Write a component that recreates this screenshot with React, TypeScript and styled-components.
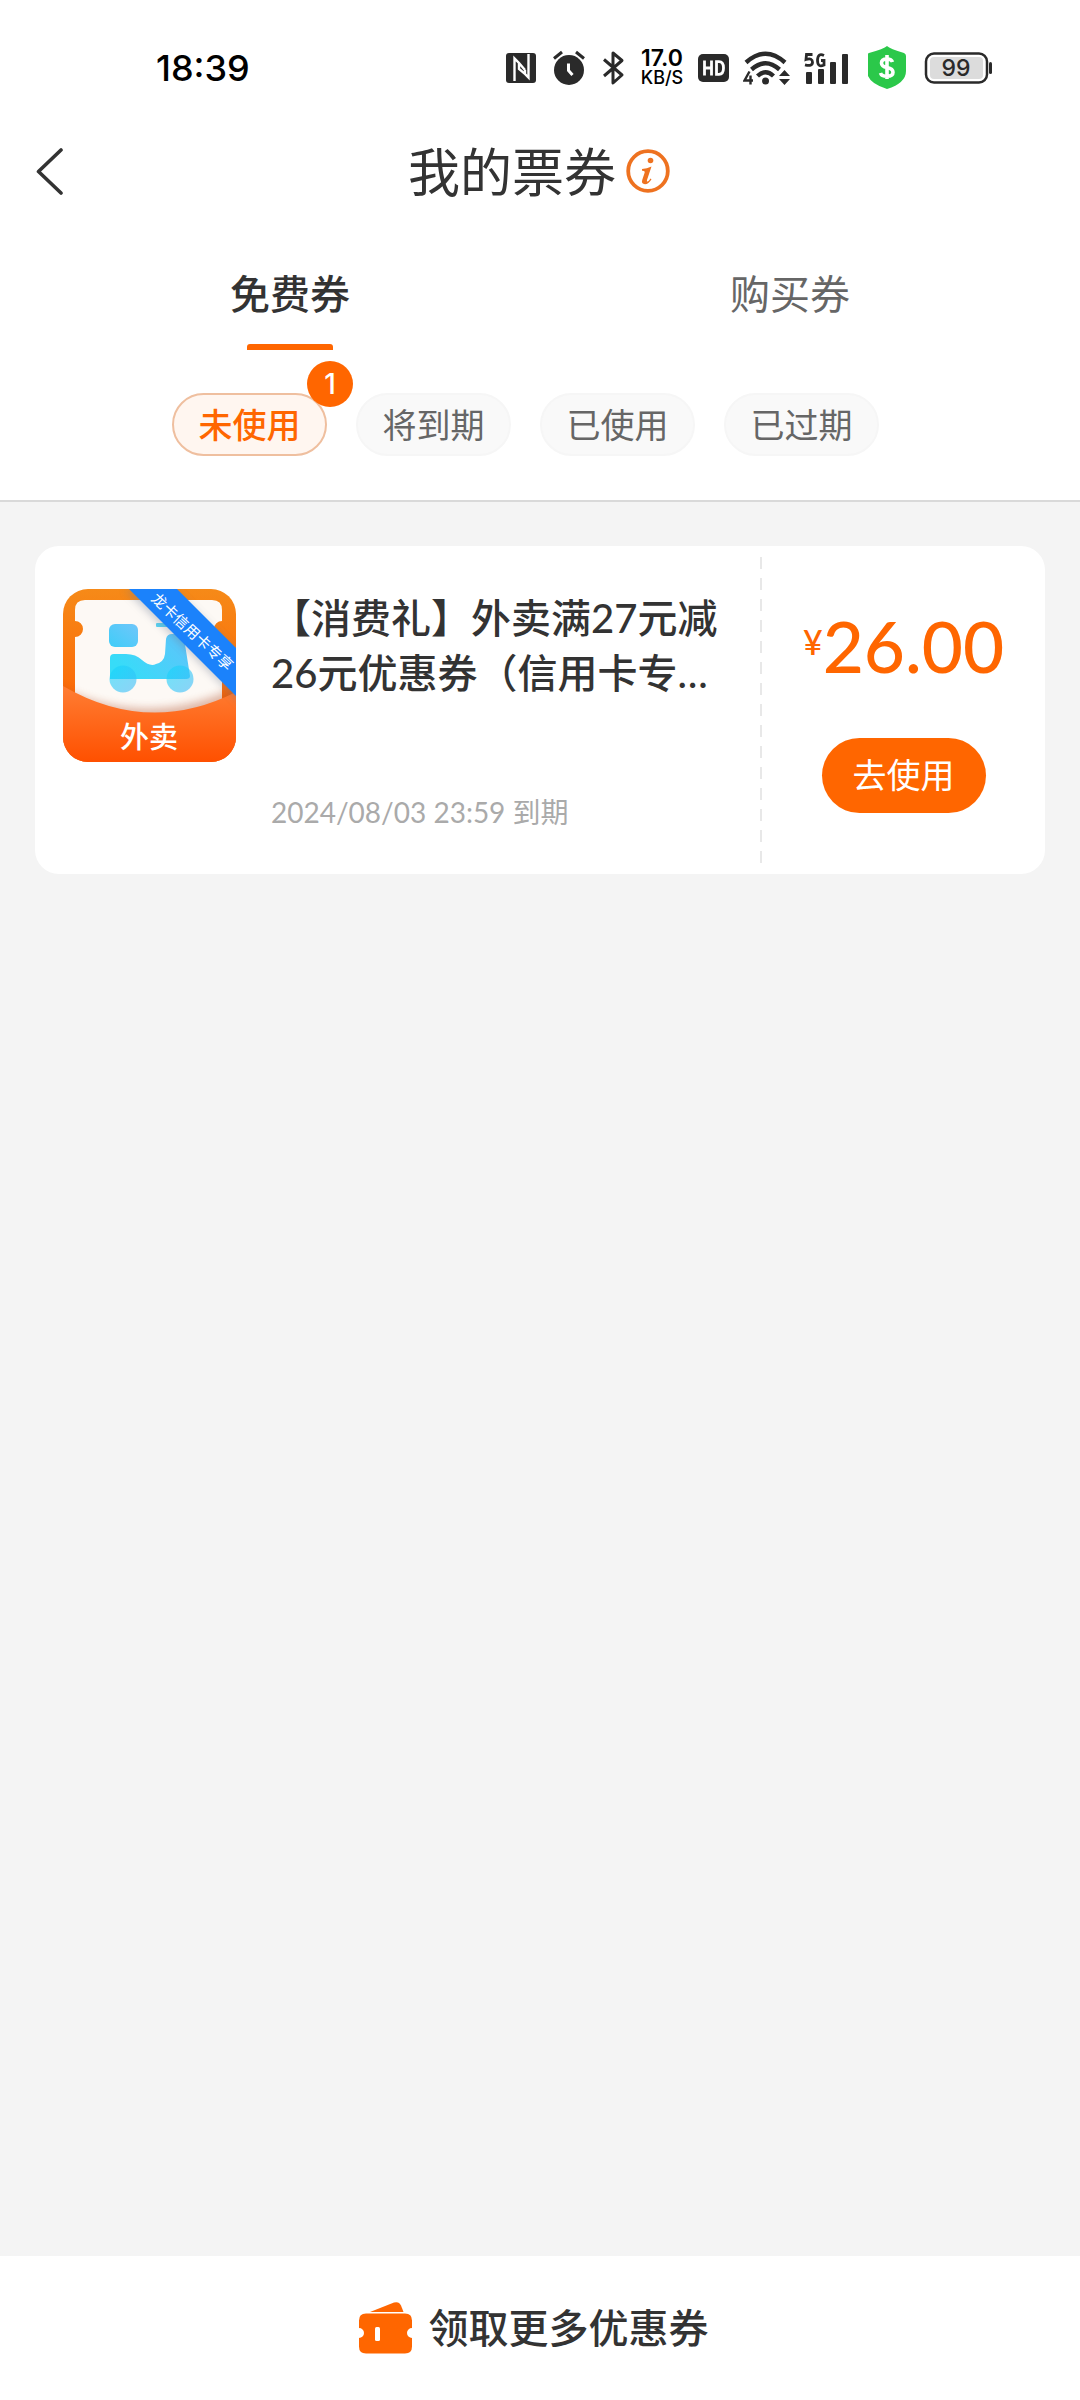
import React, { useState } from "react";
import styled, { createGlobalStyle, css } from "styled-components";

const orange = "#ff6600";
const ink = "#2a2a2a";

const GlobalStyle = createGlobalStyle`
  *, *::before, *::after { box-sizing: border-box; }
  body {
    margin: 0;
    background: #f4f4f4;
    color: #333;
    font-family: Lato, "Noto Sans CJK SC", sans-serif;
  }
  h1, h2, p { margin: 0; font-weight: 400; }
  button { font-family: inherit; padding: 0; border: 0; background: none; cursor: pointer; }
  svg { display: block; flex: none; }
`;

const Page = styled.div`
  min-height: 100vh;
  display: flex;
  flex-direction: column;
`;

const Top = styled.header`
  background: #fff;
  border-bottom: 2px solid #d9d9d9;
`;

const StatusBar = styled.div`
  height: 136px;
  padding: 0 88px 0 156px;
  display: flex;
  align-items: center;
  justify-content: space-between;
  font-family: Inter, sans-serif;
  color: #000;
`;

const Clock = styled.time`
  font-size: 36px;
  line-height: 40px;
  font-weight: 500;
`;

const StatusIcons = styled.div`
  display: flex;
  align-items: center;
  gap: 14px;
`;

const Speed = styled.div`
  width: 44px;
  display: flex;
  flex-direction: column;
  align-items: center;
  font-weight: 600;
  font-size: 23px;
  line-height: 20px;
`;

const SpeedUnit = styled.span`
  font-weight: 500;
  font-size: 18px;
  line-height: 20px;
`;

const TitleBar = styled.div`
  height: 72px;
  padding: 0 36px;
  display: grid;
  grid-template-columns: 1fr auto 1fr;
  align-items: center;
`;

const IconButton = styled.button`
  display: flex;
  justify-self: start;
`;

const TitleGroup = styled.div`
  display: flex;
  align-items: center;
  gap: 10px;
`;

const Title = styled.h1`
  font-size: 52px;
  line-height: 72px;
`;

const Tabs = styled.div`
  display: flex;
  padding: 56px 40px 0;
`;

const Tab = styled.button<{ $active: boolean }>`
  flex: 1;
  display: flex;
  flex-direction: column;
  align-items: center;
  gap: 20px;
  font-size: 40px;
  line-height: 60px;
  font-weight: ${(p) => (p.$active ? 500 : 400)};
  color: ${(p) => (p.$active ? "#333" : "#666")};

  &::after {
    content: "";
    width: 86px;
    height: 6px;
    border-radius: 3px 3px 0 0;
    background: ${(p) => (p.$active ? orange : "transparent")};
  }
`;

const Chips = styled.div`
  display: flex;
  justify-content: center;
  padding: 43px 0 44px;
`;

const Chip = styled.button<{ $active: boolean }>`
  position: relative;
  width: 155px;
  height: 63px;
  margin-right: 29px;
  border: 2px solid #f6f6f6;
  border-radius: 32px;
  background: #f9f9f9;
  color: #666;
  font-size: 34px;
  line-height: 48px;
  ${(p) =>
    p.$active &&
    css`
      border-color: #efbf9f;
      background: #fff6f0;
      color: ${orange};
      font-weight: 500;
    `}
`;

const Badge = styled.span`
  position: absolute;
  top: -34px;
  right: -28px;
  width: 46px;
  height: 46px;
  border-radius: 50%;
  background: ${orange};
  color: #fff;
  font-family: Inter, sans-serif;
  font-size: 28px;
  line-height: 46px;
  text-align: center;
`;

const List = styled.main`
  flex: 1;
  padding: 44px 35px;
`;

const Card = styled.article`
  display: flex;
  background: #fff;
  border-radius: 24px;
`;

const CardBody = styled.div`
  flex: 1;
  min-width: 0;
  display: flex;
  align-items: flex-start;
  gap: 35px;
  padding: 43px 40px 44px 28px;
`;

const CardInfo = styled.div`
  flex: 1;
  min-width: 0;
  padding: 2px 0;
`;

const CardTitle = styled.h2`
  font-size: 40px;
  line-height: 55px;
  font-weight: 500;
`;

const Expiry = styled.p`
  margin-top: 95px;
  font-size: 28px;
  line-height: 32px;
  color: #aaa;
`;

const Perforation = styled.div`
  width: 2px;
  margin: 11px 0;
  background: repeating-linear-gradient(#e8e8e8 0 12px, transparent 12px 21px);
`;

const Stub = styled.div`
  width: 283px;
  padding-top: 2px;
  display: flex;
  flex-direction: column;
  align-items: center;
  justify-content: center;
  gap: 56px;
`;

const Price = styled.p`
  display: flex;
  align-items: center;
  font-size: 71px;
  line-height: 72px;
  font-weight: 500;
  color: ${orange};
`;

const Currency = styled.span`
  font-size: 34px;
  line-height: 40px;
  padding-bottom: 8px;
`;

const UseButton = styled.button`
  width: 164px;
  height: 75px;
  border-radius: 38px;
  background: ${orange};
  color: #fff;
  font-size: 34px;
  line-height: 48px;
`;

const Footer = styled.footer`
  height: 144px;
  background: #fff;
  display: flex;
  align-items: center;
  justify-content: center;
`;

const MoreLink = styled.a`
  display: flex;
  align-items: center;
  gap: 15px;
  margin-right: 14px;
  color: #333;
  text-decoration: none;
  font-size: 40px;
  line-height: 60px;
  font-weight: 500;
`;

const NfcIcon = () => (
  <svg width="32" height="32" viewBox="0 0 32 32">
    <rect y="1" width="30" height="30" rx="3" fill={ink} />
    <path d="M8.500 29V6.500L13 11v6l6 5v-4M22.500 2v23.500L17 20M13 11l6 7" fill="none" stroke="#fff" strokeWidth="2.400" />
  </svg>
);

const AlarmIcon = () => (
  <svg width="36" height="36" viewBox="0 0 36 36">
    <circle cx="17" cy="20" r="15" fill={ink} />
    <path d="M2 8.500l8-6.500M32 8.500L24 2" stroke={ink} strokeWidth="3" />
    <path d="M16.500 13.500v7l4 4.500" fill="none" stroke="#fff" strokeWidth="3" />
  </svg>
);

const BluetoothIcon = () => (
  <svg width="24" height="36" viewBox="0 0 24 36">
    <path
      d="M2 9.500l18 15.500-9 8V3l9 7.500L2 26"
      fill="none"
      stroke={ink}
      strokeWidth="3"
      strokeLinejoin="round"
    />
  </svg>
);

const HdIcon = () => (
  <svg width="31" height="28" viewBox="0 0 31 28">
    <rect width="31" height="28" rx="5" fill={ink} />
    <path
      d="M6.500 6.500v15M13.500 6.500v15M6.500 14h7M18.500 7.700h2.500q4.500 0 4.500 6.300t-4.500 6.300h-2.500z"
      fill="none"
      stroke="#fff"
      strokeWidth="2.800"
    />
  </svg>
);

const WifiIcon = () => (
  <svg width="47" height="34" viewBox="0 0 47 34">
    <path
      d="M3 11.500Q22.500-6 42 11.500M8.500 18.500q14-12.500 28 0M14.500 25q8-7.500 16 0"
      fill="none"
      stroke={ink}
      strokeWidth="4.400"
    />
    <circle cx="22.500" cy="30" r="3.500" fill={ink} />
    <path d="M36 25l5.500-6 5.500 6zM36 28l5.500 6 5.500-6z" fill={ink} />
    <path d="M6.500 20.500L1.500 29.500h8.500M7.500 24.500v9" fill="none" stroke={ink} strokeWidth="2.400" />
  </svg>
);

const SignalIcon = () => (
  <svg width="50" height="34" viewBox="0 0 50 34">
    <path
      d="M8.500 3.500H2.500L2 8.500q6.500-2 6.500 2.800 0 4.500-7.500 2.500M20 4.500q-6-3-6.500 4.500 0 8 6.500 5V9.500h-3"
      fill="none"
      stroke={ink}
      strokeWidth="2.800"
    />
    <rect x="2" y="21" width="6" height="12" rx="1" fill={ink} />
    <rect x="14" y="18" width="6" height="15" rx="1" fill={ink} />
    <rect x="26" y="11" width="6" height="22" rx="1" fill={ink} />
    <rect x="38" y="3" width="6" height="30" rx="1" fill={ink} />
  </svg>
);

const ShieldIcon = () => (
  <svg width="42" height="46" viewBox="0 0 42 46">
    <path d="M19 1q3 3 17 7 2 1 2 3v15q0 12-19 18Q-1 38-1 26V11q0-2 2-3Q16 4 19 1z" fill="#2bc84a" />
    <path
      d="M24.500 17q-1-3-5.500-3-5.500 0-5.500 4 0 3.500 5.500 4.500 6 1 6 4.800 0 4-6 4-5.500 0-6.500-3.300M19 10v24"
      fill="none"
      stroke="#fff"
      strokeWidth="3.600"
    />
  </svg>
);

const BatteryIcon = () => (
  <svg width="68" height="32" viewBox="0 0 68 32">
    <rect x="2" y="1.500" width="61" height="29" rx="8" fill="#fff" stroke={ink} strokeWidth="2.500" />
    <rect x="6" y="5" width="53" height="22" rx="4" fill="#dcdcdc" />
    <rect x="65" y="10" width="3" height="12" rx="1.500" fill={ink} />
    <text x="32" y="24" textAnchor="middle" fontFamily="Inter, sans-serif" fontSize="23" fontWeight="500" fill={ink}>
      99
    </text>
  </svg>
);

const BackIcon = () => (
  <svg width="30" height="48" viewBox="0 0 30 48">
    <path
      d="M25 2L2.500 23.500 25 45"
      fill="none"
      stroke="#333"
      strokeWidth="3.600"
      strokeLinecap="round"
      strokeLinejoin="round"
    />
  </svg>
);

const InfoIcon = () => (
  <svg width="46" height="46" viewBox="0 0 46 46">
    <circle cx="22" cy="22" r="19.800" fill="none" stroke="#ee7220" strokeWidth="3.800" />
    <circle cx="24.500" cy="11.500" r="2.800" fill="#ee7220" />
    <path
      d="M16 20q5-.5 9.500-2.500l-4.500 13.500q-.5 2 .8 1.500 1.200-.6 2.700-3l1 .7q-3 5-6.500 5-4-.2-2.800-4.200l2.500-7.500q.5-2-2.700-1.700z"
      fill="#ee7220"
    />
  </svg>
);

const TicketIcon = () => (
  <svg width="56" height="54" viewBox="0 0 56 54">
    <path d="M12 11L36 1.500q5-1.500 7 3l2.500 6.500z" fill={orange} />
    <path
      d="M8 12.500h39q7 0 7 7v7.500a5 5 0 0 0 0 10v8.500q0 7-7 7H8q-7 0-7-7V37a5 5 0 0 0 0-10v-7.500q0-7 7-7z"
      fill={orange}
    />
    <rect x="17" y="26" width="5" height="14" rx="1.500" fill="#fff" />
  </svg>
);

const TakeawayIcon = () => (
  <svg width="173" height="173" viewBox="0 0 173 173" role="img" aria-label="外卖">
    <defs>
      <clipPath id="tile">
        <rect width="173" height="173" rx="25" />
      </clipPath>
      <linearGradient id="back" x1="0" y1="0" x2="0" y2="1">
        <stop offset="0" stopColor="#f68a18" />
        <stop offset="0.600" stopColor="#fb6a08" />
      </linearGradient>
      <linearGradient id="pocket" x1="0" y1="0" x2="0" y2="1">
        <stop offset="0" stopColor="#ff7d33" />
        <stop offset="1" stopColor="#ff5000" />
      </linearGradient>
      <linearGradient id="scooter" x1="0" y1="0.500" x2="1" y2="0">
        <stop offset="0" stopColor="#37dcf8" />
        <stop offset="1" stopColor="#62c2fb" />
      </linearGradient>
      <linearGradient id="crate" x1="0" y1="1" x2="1" y2="0">
        <stop offset="0" stopColor="#3fcdf8" />
        <stop offset="1" stopColor="#70c6fa" />
      </linearGradient>
      <linearGradient id="wheel" x1="0" y1="0" x2="1" y2="1">
        <stop offset="0" stopColor="#12d6fb" />
        <stop offset="1" stopColor="#3fb8f7" />
      </linearGradient>
      <filter id="shade" x="-20%" y="-20%" width="140%" height="140%">
        <feGaussianBlur stdDeviation="4" />
      </filter>
    </defs>
    <g clipPath="url(#tile)">
      <rect width="173" height="173" fill="url(#back)" />
      <path
        d="M22 11h127q10 0 10 10v11a8 8 0 0 0 0 16v80H12V48a8 8 0 0 0 0-16V21q0-10 10-10z"
        fill="#fdf9f5"
      />
      <rect x="46" y="35" width="29" height="23" rx="6" fill="url(#crate)" />
      <rect x="93" y="34" width="22" height="4" rx="1" fill="#58d3f3" />
      <path
        d="M47 69q0-4 4-4h12q10 0 16 6 8 7 14 4 8-2 9-10l1-15q1-5 6-5h7q4 0 5 4l6 38q0 3-4 3H47z"
        fill="url(#scooter)"
      />
      <circle cx="60" cy="90" r="13.500" fill="url(#wheel)" opacity="0.600" />
      <circle cx="117" cy="90" r="13.500" fill="url(#wheel)" opacity="0.600" />
      <path d="M-10 95Q86 145 183 93v80H-10z" fill="#b0502a" opacity="0.400" filter="url(#shade)" />
      <path d="M0 97Q86 147 173 103v70H0z" fill="url(#pocket)" />
      <path d="M62 0h48l70 70v46z" fill="#6a7890" opacity="0.400" filter="url(#shade)" />
      <path d="M66 0h48l59 59v48z" fill="#1b82fb" />
      <text
        x="129"
        y="48"
        transform="rotate(43 129 43)"
        textAnchor="middle"
        fontFamily='"Noto Sans CJK SC", sans-serif'
        fontSize="15"
        fill="#fff"
      >
        龙卡信用卡专享
      </text>
      <text
        x="86"
        y="159"
        textAnchor="middle"
        fontFamily='"Noto Sans CJK SC", sans-serif'
        fontSize="29"
        fontWeight="500"
        fill="#fff"
      >
        外卖
      </text>
    </g>
  </svg>
);

const tabs = ["免费券", "购买券"];
const filters = [
  { label: "未使用", count: 1 },
  { label: "将到期", count: 0 },
  { label: "已使用", count: 0 },
  { label: "已过期", count: 0 },
];

export default function App() {
  const [tab, setTab] = useState(0);
  const [filter, setFilter] = useState(0);

  return (
    <Page>
      <GlobalStyle />
      <Top>
        <StatusBar>
          <Clock>18:39</Clock>
          <StatusIcons>
            <NfcIcon />
            <AlarmIcon />
            <BluetoothIcon />
            <Speed>
              17.0
              <SpeedUnit>KB/S</SpeedUnit>
            </Speed>
            <HdIcon />
            <WifiIcon />
            <SignalIcon />
            <ShieldIcon />
            <BatteryIcon />
          </StatusIcons>
        </StatusBar>
        <TitleBar>
          <IconButton aria-label="返回">
            <BackIcon />
          </IconButton>
          <TitleGroup>
            <Title>我的票券</Title>
            <IconButton aria-label="说明">
              <InfoIcon />
            </IconButton>
          </TitleGroup>
        </TitleBar>
        <Tabs role="tablist">
          {tabs.map((label, i) => (
            <Tab key={label} role="tab" aria-selected={tab === i} $active={tab === i} onClick={() => setTab(i)}>
              {label}
            </Tab>
          ))}
        </Tabs>
        <Chips>
          {filters.map(({ label, count }, i) => (
            <Chip key={label} aria-pressed={filter === i} $active={filter === i} onClick={() => setFilter(i)}>
              {label}
              {count > 0 && <Badge>{count}</Badge>}
            </Chip>
          ))}
        </Chips>
      </Top>
      <List>
        <Card>
          <CardBody>
            <TakeawayIcon />
            <CardInfo>
              <CardTitle>【消费礼】外卖满27元减26元优惠券（信用卡专…</CardTitle>
              <Expiry>2024/08/03 23:59 到期</Expiry>
            </CardInfo>
          </CardBody>
          <Perforation />
          <Stub>
            <Price>
              <Currency>¥</Currency>26.00
            </Price>
            <UseButton>去使用</UseButton>
          </Stub>
        </Card>
      </List>
      <Footer>
        <MoreLink href="#more">
          <TicketIcon />
          领取更多优惠券
        </MoreLink>
      </Footer>
    </Page>
  );
}
